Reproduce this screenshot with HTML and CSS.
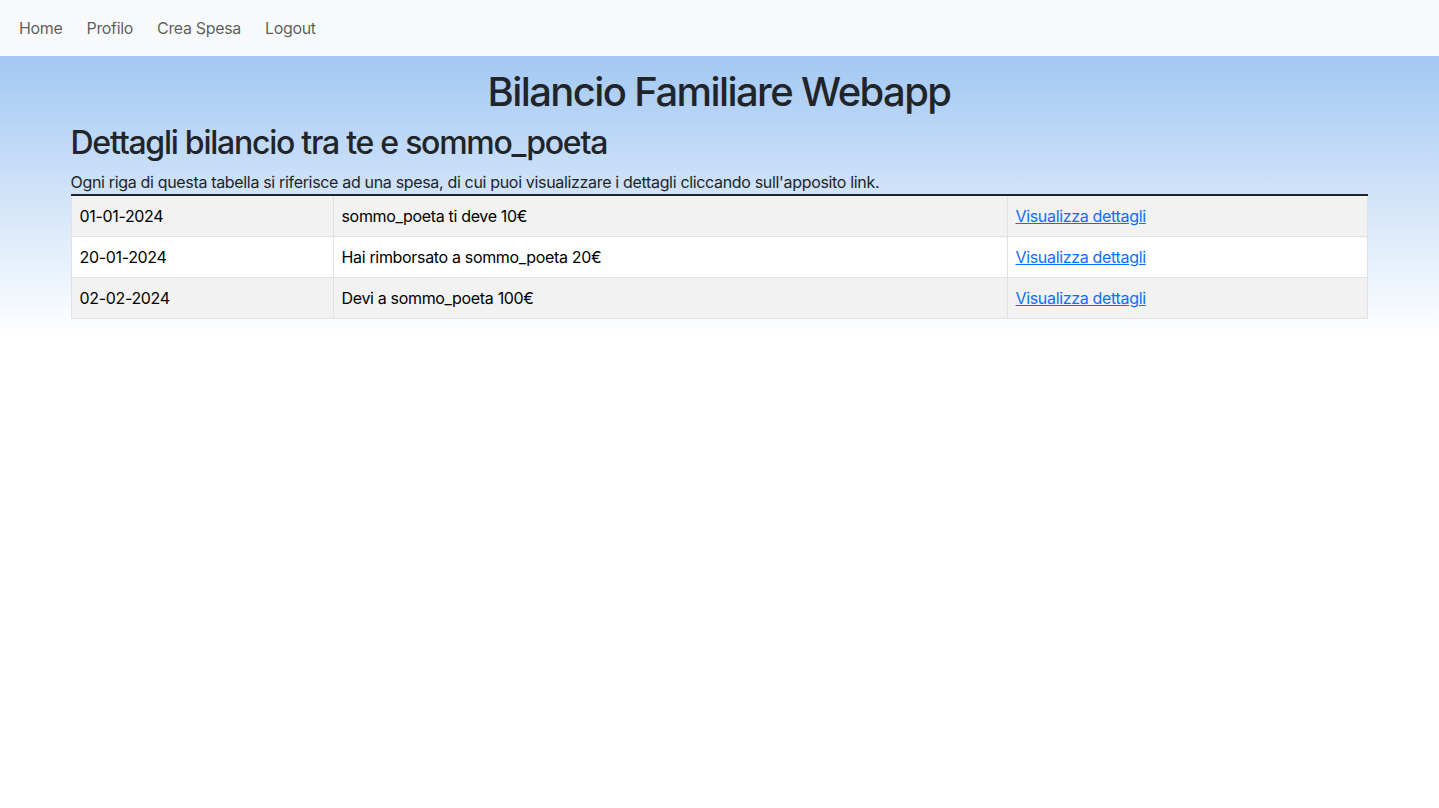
FILE: index.html
```html
<!DOCTYPE html>
<html lang="it">
<head>
<meta charset="utf-8">
<title>Bilancio Familiare Webapp</title>
<link rel="stylesheet" href="styles.css">
</head>
<body>
<nav class="navbar">
  <ul class="nav-list">
    <li><a class="nav-link" href="#">Home</a></li>
    <li><a class="nav-link" href="#">Profilo</a></li>
    <li><a class="nav-link" href="#">Crea Spesa</a></li>
    <li><a class="nav-link" href="#">Logout</a></li>
  </ul>
</nav>
<main class="page">
  <div class="container">
    <h1 class="title">Bilancio Familiare Webapp</h1>
    <h2 class="subtitle">Dettagli bilancio tra te e sommo_poeta</h2>
    <p class="intro">Ogni riga di questa tabella si riferisce ad una spesa, di cui puoi visualizzare i dettagli cliccando sull'apposito link.</p>
    <table class="table">
      <tbody>
        <tr class="striped">
          <td class="col-date">01-01-2024</td>
          <td class="col-desc">sommo_poeta ti deve 10€</td>
          <td class="col-link"><a href="#">Visualizza dettagli</a></td>
        </tr>
        <tr>
          <td class="col-date">20-01-2024</td>
          <td class="col-desc">Hai rimborsato a sommo_poeta 20€</td>
          <td class="col-link"><a href="#">Visualizza dettagli</a></td>
        </tr>
        <tr class="striped">
          <td class="col-date">02-02-2024</td>
          <td class="col-desc">Devi a sommo_poeta 100€</td>
          <td class="col-link"><a href="#">Visualizza dettagli</a></td>
        </tr>
      </tbody>
    </table>
  </div>
</main>
</body>
</html>
```
FILE: styles.css
```css
* { box-sizing: border-box; }
html, body {
  margin: 0;
  padding: 0;
  background: #fff;
}
body {
  font-family: Inter, "Liberation Sans", sans-serif;
  font-size: 16px;
  line-height: 1.5;
  color: #212529;
  letter-spacing: -0.33px;
}
.navbar {
  height: 56px;
  background: #f8f9fa;
  display: flex;
  align-items: center;
  padding: 0 11px;
}
.nav-list {
  list-style: none;
  margin: 0;
  padding: 0;
  display: flex;
  gap: 8px;
}
.nav-link {
  display: block;
  padding: 8px;
  color: rgba(0, 0, 0, 0.65);
  text-decoration: none;
  font-size: 16px;
}
.page {
  background: linear-gradient(to bottom, #a3c8f3 0%, #ffffff 100%);
  padding-top: 12px;
  padding-bottom: 16px;
}
.container {
  max-width: 1320px;
  margin: 0 auto;
  padding: 0 12px 0 11px;
}
.title {
  margin: 0 0 8px;
  font-size: 40px;
  font-weight: 500;
  line-height: 1.2;
  text-align: center;
  letter-spacing: -1.6px;
}
.subtitle {
  margin: 0 0 8px;
  font-size: 32px;
  font-weight: 500;
  line-height: 1.2;
  letter-spacing: -1.25px;
}
.intro {
  margin: 0;
}
.table {
  width: 100%;
  border-collapse: collapse;
  color: #000;
  background: #fff;
  border: 1px solid #dee2e6;
}
.table td {
  padding: 8px;
  border: 1px solid #dee2e6;
  vertical-align: top;
}
.table tbody tr:first-child td {
  border-top: 2px solid #212529;
}
.table tr.striped td {
  background: #f2f2f2;
}
.col-date { width: 262px; }
.col-desc { width: 674px; }
.col-link a {
  color: #0d6efd;
  text-decoration: underline;
}
```
